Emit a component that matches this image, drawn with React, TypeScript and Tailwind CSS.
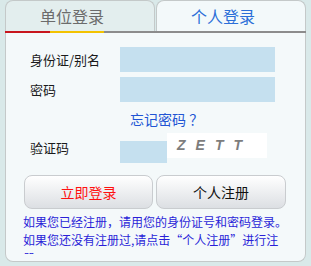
export default function App() {
  const cjk = { fontFamily: '"Noto Sans CJK SC", "Noto Sans", sans-serif' };

  return (
    <div className="w-[311px] h-[266px] overflow-hidden bg-[#d9e9e9] pl-[5px]" style={cjk}>
      <div className="w-[301px]">
        <div className="flex h-[31px] gap-[1px]">
          <div className="flex w-[150px] items-center justify-center rounded-t-[8px] border border-b-0 border-[#c4c9c9] bg-[#e3eeee] pr-[16px] text-[16px] text-[#6b6b6b]">
            单位登录
          </div>
          <div className="flex flex-1 items-center justify-center rounded-t-[8px] border border-b-0 border-[#c4c9c9] bg-[#f3f9fa] pr-[16px] text-[16px] text-[#2b6fd8]">
            个人登录
          </div>
        </div>
        <div className="flex h-[2px]">
          <div className="w-[45px] bg-[#c8161d]" />
          <div className="w-[54px] bg-[#f3c300]" />
          <div className="flex-1 bg-[#8c8c8c]" />
        </div>

        <div className="h-[229px] rounded-b-[8px] border-x border-b border-[#c4c9c9] bg-[#f4f9fa] pt-[14px]">
          <div className="flex items-center pl-[24px]">
            <span className="w-[90px] text-[13px] leading-[20px] text-[#1a1a1a]">身份证/别名</span>
            <div className="h-[25px] w-[155px] bg-[#c5e0ef]" />
          </div>
          <div className="mt-[5px] flex items-center pl-[24px]">
            <span className="w-[90px] text-[13px] leading-[20px] text-[#1a1a1a]">密码</span>
            <div className="h-[25px] w-[155px] bg-[#c5e0ef]" />
          </div>
          <div className="ml-[124px] mt-[7px] text-[14px] leading-[20px] text-[#2255d4]">忘记密码 ？</div>
          <div className="mt-[4px] flex items-start pl-[24px]">
            <span className="mt-[5px] w-[90px] text-[13px] leading-[20px] text-[#1a1a1a]">验证码</span>
            <div className="mt-[8px] h-[22px] w-[47px] bg-[#c5e0ef]" />
            <div
              className="flex h-[25px] w-[100px] items-center bg-white pl-[10px] text-[14px] font-bold italic tracking-[10px] text-[#7d7d7d]"
              style={{ fontFamily: '"Liberation Sans", sans-serif' }}
            >
              ZETT
            </div>
          </div>
          <div className="mt-[12px] flex gap-[3px] pl-[18px]">
            <button className="h-[34px] w-[129px] rounded-[8px] border border-[#c9cccf] bg-gradient-to-b from-white to-[#dcdfe3] text-[14px] text-[#ff1010]">
              立即登录
            </button>
            <button className="h-[34px] w-[130px] rounded-[8px] border border-[#c9cccf] bg-gradient-to-b from-white to-[#dcdfe3] text-[14px] text-[#111]">
              个人注册
            </button>
          </div>
          <div className="ml-[17px] mt-[4px] h-[41px] w-[266px] overflow-hidden text-[12px] leading-[18px] text-[#2a1fd8]">
            如果您已经注册，请用您的身份证号和密码登录。如果您还没有注册过,请点击“个人注册”进行注册
          </div>
        </div>
      </div>
    </div>
  );
}
